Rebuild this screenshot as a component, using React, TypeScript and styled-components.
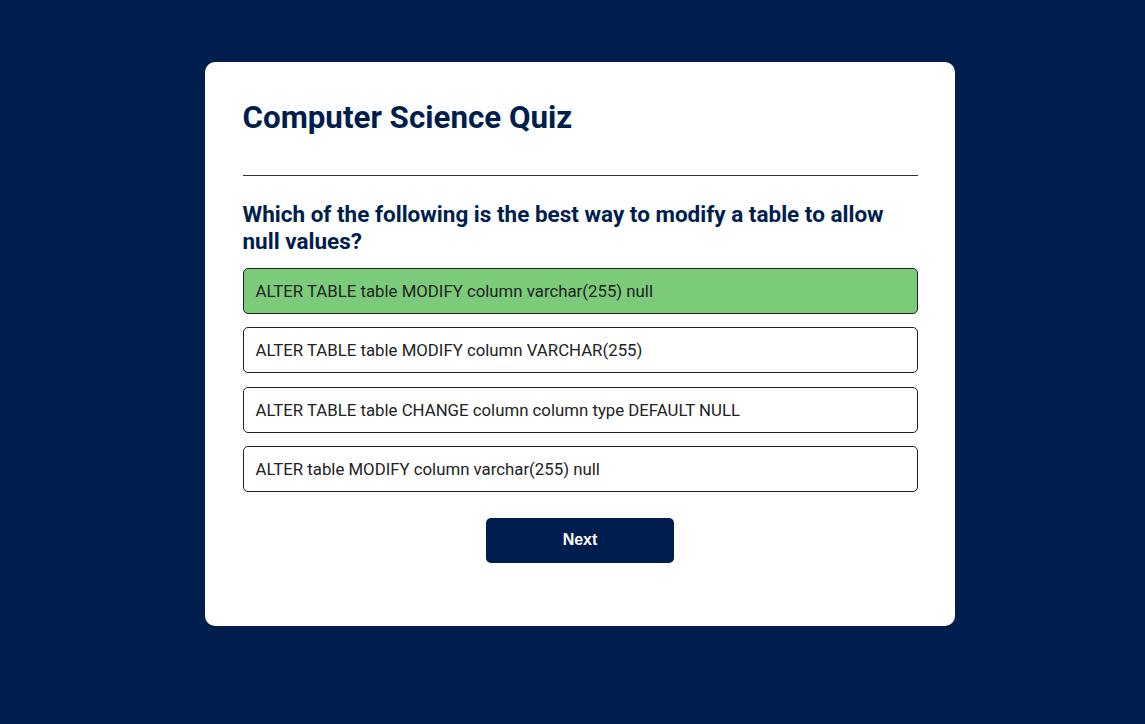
import styled, { createGlobalStyle } from "styled-components";

const GlobalStyle = createGlobalStyle`
    html, body {
        margin: 0;
        padding: 0;
        background-color: #001e4d;
        font-family: Roboto, "Noto Sans", sans-serif;
    }
`;

const StyledPage = styled.main`
    display: flex;
    justify-content: center;
    align-items: flex-start;
    min-height: 100vh;
    padding: 62px 0 0 15px;
    box-sizing: border-box;
`;

const StyledCard = styled.section`
    width: 750px;
    box-sizing: border-box;
    padding: 37px 37.5px 63px;
    background-color: #ffffff;
    border-radius: 10px;
`;

const StyledTitle = styled.h1`
    margin: 0;
    font-size: 31.3px;
    line-height: 38px;
    font-weight: 700;
    color: #001e4d;
`;

const StyledRule = styled.hr`
    margin: 38px 0 0;
    border: none;
    border-top: 1px solid #333333;
`;

const StyledQuestion = styled.h2`
    margin: 25px 0 13px;
    font-size: 22.5px;
    line-height: 27px;
    font-weight: 700;
    color: #001e4d;
`;

const StyledAnswers = styled.div`
    display: flex;
    flex-direction: column;
    gap: 13.3px;
`;

const StyledAnswer = styled.button<{ $correct?: boolean }>`
    display: flex;
    align-items: center;
    height: 46px;
    padding: 0 12px;
    text-align: left;
    font-family: Roboto, "Noto Sans", sans-serif;
    font-size: 16.8px;
    color: #222222;
    background-color: ${(p) => (p.$correct ? "#7bcb7b" : "#ffffff")};
    border: 1px solid #222222;
    border-radius: 5px;
    cursor: pointer;
`;

const StyledFooter = styled.div`
    display: flex;
    justify-content: center;
    margin-top: 26px;
`;

const StyledNext = styled.button`
    width: 188px;
    height: 45px;
    border: none;
    border-radius: 5px;
    background-color: #001e4d;
    color: #ffffff;
    font-family: "Liberation Sans", Arial, sans-serif;
    font-weight: 700;
    font-size: 16px;
    cursor: pointer;
`;

const answers = [
    { text: "ALTER TABLE table MODIFY column varchar(255) null", correct: true },
    { text: "ALTER TABLE table MODIFY column VARCHAR(255)", correct: false },
    { text: "ALTER TABLE table CHANGE column column type DEFAULT NULL", correct: false },
    { text: "ALTER table MODIFY column varchar(255) null", correct: false },
];

export default function App() {
    return (
        <>
            <GlobalStyle />
            <StyledPage>
                <StyledCard>
                    <StyledTitle>Computer Science Quiz</StyledTitle>
                    <StyledRule />
                    <StyledQuestion>
                        Which of the following is the best way to modify a table to allow null values?
                    </StyledQuestion>
                    <StyledAnswers>
                        {answers.map((a) => (
                            <StyledAnswer key={a.text} $correct={a.correct}>
                                {a.text}
                            </StyledAnswer>
                        ))}
                    </StyledAnswers>
                    <StyledFooter>
                        <StyledNext>Next</StyledNext>
                    </StyledFooter>
                </StyledCard>
            </StyledPage>
        </>
    );
}
